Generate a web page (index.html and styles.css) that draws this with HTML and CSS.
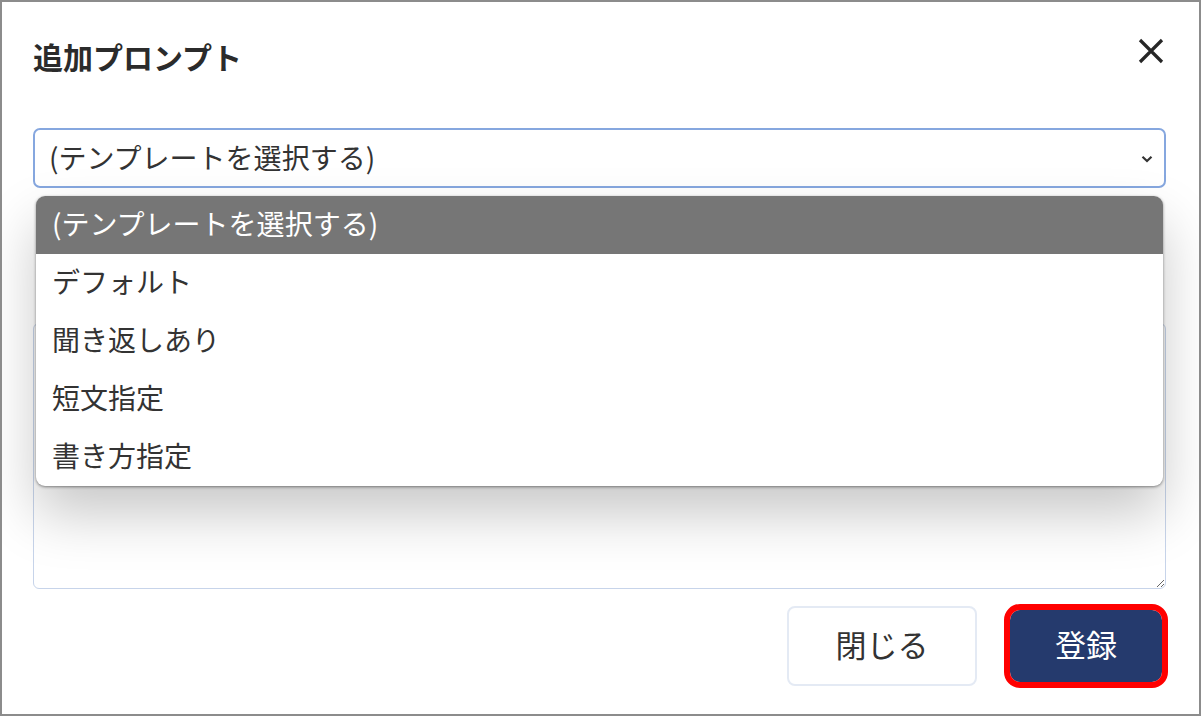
FILE: index.html
```html
<!DOCTYPE html>
<html lang="ja">
<head>
    <meta charset="UTF-8">
    <title>追加プロンプト</title>
    <link rel="stylesheet" href="styles.css">
</head>
<body>
    <div class="frame">
        <div class="modal-header">
            <h2 class="modal-title">追加プロンプト</h2>
            <button class="close-btn" type="button" aria-label="閉じる">
                <svg width="26" height="26" viewBox="0 0 26 26">
                    <path d="M2 2 L24 24 M24 2 L2 24" stroke="#262626" stroke-width="3.2" stroke-linecap="butt" fill="none"/>
                </svg>
            </button>
        </div>

        <div class="select-wrap">
            <div class="select-box">
                <span>(テンプレートを選択する)</span>
                <svg class="chevron" width="12" height="8" viewBox="0 0 12 8">
                    <path d="M1.5 1.8 L6 6 L10.5 1.8" stroke="#333" stroke-width="2.2" fill="none"/>
                </svg>
            </div>
            <ul class="options">
                <li class="active">(テンプレートを選択する)</li>
                <li>デフォルト</li>
                <li>聞き返しあり</li>
                <li>短文指定</li>
                <li>書き方指定</li>
            </ul>
        </div>

        <!-- label sits behind the open list -->
        <div class="field-label"></div>
        <textarea class="prompt-text"></textarea>

        <div class="modal-footer">
            <button class="btn btn-close" type="button">閉じる</button>
            <button class="btn btn-save" type="button">登録</button>
        </div>
    </div>
</body>
</html>
```

FILE: styles.css
```css
* {
    padding: 0;
    margin: 0;
    box-sizing: border-box;
}
body {
    font-family: "Noto Sans CJK JP", "Noto Sans", sans-serif;
    color: #333;
    background: #fff;
}
.frame {
    width: 1201px;
    height: 716px;
    border: 2px solid #8c8c8c;
    padding: 33px 33px 0 31px;
    display: flex;
    flex-direction: column;
    overflow: hidden;
}
.modal-header {
    display: flex;
    justify-content: space-between;
    align-items: flex-start;
    height: 42px;
}
.modal-title {
    font-size: 30px;
    font-weight: 700;
    line-height: 42px;
    color: #2b2b2b;
}
.close-btn {
    border: none;
    background: none;
    margin-top: 3px;
    margin-right: 2px;
    width: 26px;
    height: 26px;
    display: flex;
}
.select-wrap {
    position: relative;
    margin-top: 51px;
}
.select-box {
    height: 60px;
    border: 2px solid #86a7df;
    border-radius: 7px;
    padding: 0 11px 3px 14px;
    display: flex;
    align-items: center;
    justify-content: space-between;
    font-size: 28px;
    color: #333;
}
.chevron {
    margin-top: 5px;
}
.options {
    list-style: none;
    position: absolute;
    top: 68px;
    left: 3px;
    right: 3px;
    background: #fff;
    border-radius: 9px;
    overflow: hidden;
    z-index: 5;
    box-shadow: 0 1px 3px rgba(0, 0, 0, 0.45), 0 28px 55px rgba(0, 0, 0, 0.22);
}
.options li {
    height: 58px;
    line-height: 54px;
    padding: 0 0 4px 16px;
    font-size: 28px;
    color: #333;
}
.options li.active {
    background: #767676;
    color: #fff;
}
.field-label {
    margin-top: 28px;
    height: 30px;
}
.prompt-text {
    margin-top: 77px;
    height: 266px;
    width: 100%;
    border: 1px solid #c7d4ea;
    border-radius: 6px;
    resize: vertical;
    font-family: inherit;
}
.modal-footer {
    display: flex;
    justify-content: flex-end;
    align-items: center;
    margin-top: 17px;
    gap: 33px;
    padding-right: 4px;
}
.btn {
    font-family: inherit;
    font-size: 31px;
    padding-bottom: 5px;
    cursor: pointer;
}
.btn-close {
    width: 190px;
    height: 80px;
    background: #fff;
    border: 2px solid #e4eaf4;
    border-radius: 8px;
    color: #333;
}
.btn-save {
    width: 152px;
    height: 72px;
    background: #253a6d;
    border: none;
    border-radius: 10px;
    color: #fff;
    outline: 6px solid #ff0000;
}
```
